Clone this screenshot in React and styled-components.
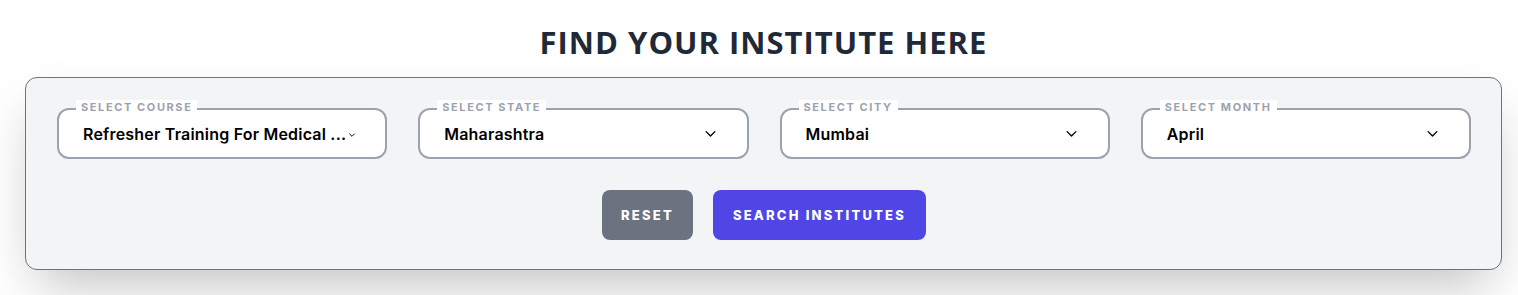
import React from 'react'
import styled, { createGlobalStyle } from 'styled-components'

const GlobalStyle = createGlobalStyle`
  html, body {
    margin: 0;
    padding: 0;
    background: #ffffff;
  }
  * {
    box-sizing: border-box;
  }
`

const Page = styled.div`
  padding: 25px 16px 25px 25px;
  font-family: Inter, 'Noto Sans', sans-serif;
`

const Title = styled.h2`
  margin: 0 0 18px;
  text-align: center;
  font-family: 'Open Sans', Inter, sans-serif;
  font-size: 31px;
  font-weight: 700;
  line-height: 34px;
  color: #1f2937;
  letter-spacing: 1px;
`

const Card = styled.div`
  background: #f3f4f6;
  border: 1px solid #6b7280;
  border-radius: 12px;
  padding: 30px 30px 29px 31px;
  box-shadow: 0 25px 50px -12px rgba(0, 0, 0, 0.25);
`

const Fields = styled.div`
  display: grid;
  grid-template-columns: repeat(4, minmax(0, 1fr));
  gap: 31px;
`

const Field = styled.div`
  position: relative;
  height: 51px;
  background: #ffffff;
  border: 2px solid #9ca3af;
  border-radius: 12px;
  display: flex;
  align-items: center;
  padding: 0 29px 0 24px;
  gap: 4px;
`

const Label = styled.span`
  position: absolute;
  top: -10px;
  left: 17px;
  padding: 0 5px;
  background: #ffffff;
  font-size: 11px;
  font-weight: 700;
  line-height: 14px;
  letter-spacing: 1.6px;
  color: #9ca3af;
  text-transform: uppercase;
`

const Value = styled.span`
  flex: ${p => (p.$compact ? '0 1 auto' : '1')};
  min-width: 0;
  white-space: nowrap;
  font-size: 16px;
  font-weight: 600;
  letter-spacing: 0.2px;
  color: #000000;
`

const Chevron = styled.svg`
  flex: none;
  width: ${p => (p.$compact ? '8px' : '15px')};
  height: ${p => (p.$compact ? '8px' : '15px')};
  margin-top: ${p => (p.$compact ? '2px' : '0')};
`

const Actions = styled.div`
  display: flex;
  justify-content: center;
  gap: 20px;
  margin-top: 31px;
`

const Button = styled.button`
  height: 50px;
  padding: 0 ${p => (p.$primary ? '20px' : '19px')};
  border: none;
  border-radius: 8px;
  background: ${p => (p.$primary ? '#4f46e5' : '#6b7280')};
  color: #ffffff;
  font-family: Inter, sans-serif;
  font-size: 13px;
  font-weight: 800;
  letter-spacing: 2.2px;
  text-transform: uppercase;
  cursor: pointer;
`

const SelectBox = ({ label, value, compact }) => (
  <Field>
    <Label>{label}</Label>
    <Value $compact={compact}>{value}</Value>
    <Chevron $compact={compact} viewBox="0 0 24 24" fill="none" stroke="#000000" strokeWidth={compact ? 3 : 2.2} strokeLinecap="round" strokeLinejoin="round">
      <path d="M5 9l7 7 7-7" />
    </Chevron>
  </Field>
)

export default function App() {
  return (
    <Page>
      <GlobalStyle />
      <Title>FIND YOUR INSTITUTE HERE</Title>
      <Card>
        <Fields>
          <SelectBox label="Select Course" value="Refresher Training For Medical ..." compact />
          <SelectBox label="Select State" value="Maharashtra" />
          <SelectBox label="Select City" value="Mumbai" />
          <SelectBox label="Select Month" value="April" />
        </Fields>
        <Actions>
          <Button>Reset</Button>
          <Button $primary>Search Institutes</Button>
        </Actions>
      </Card>
    </Page>
  )
}
